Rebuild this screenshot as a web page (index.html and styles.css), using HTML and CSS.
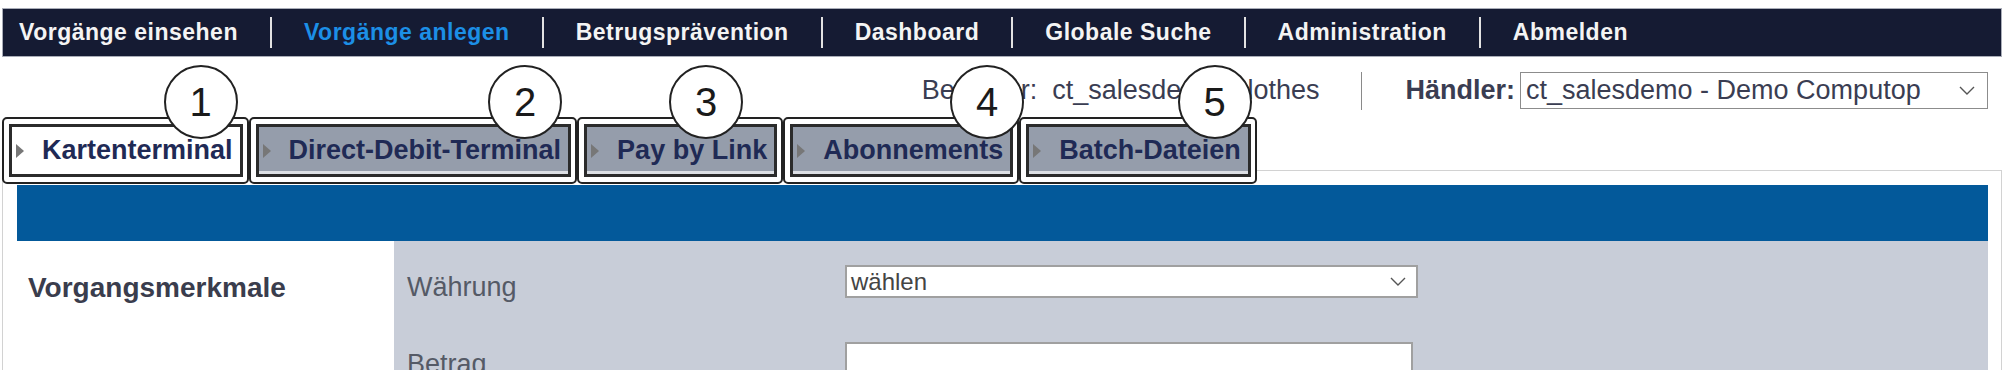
FILE: index.html
```html
<!DOCTYPE html>
<html>
<head>
  <title>Vorgänge anlegen</title>
  <link rel="stylesheet" href="styles.css">
</head>
<body>
  <div class="topnav">
    <a class="nav-item">Vorgänge einsehen</a>
    <a class="nav-item active">Vorgänge anlegen</a>
    <a class="nav-item">Betrugsprävention</a>
    <a class="nav-item">Dashboard</a>
    <a class="nav-item">Globale Suche</a>
    <a class="nav-item">Administration</a>
    <a class="nav-item">Abmelden</a>
  </div>

  <div class="userbar">
    <span class="user">Benutzer:&nbsp; ct_salesdemo_clothes</span>
    <span class="divider"></span>
    <span class="merchant-label">Händler:</span>
    <div class="select merchant">
      <span>ct_salesdemo - Demo Computop</span>
      <svg class="chevron" width="16" height="9" viewBox="0 0 16 9"><polyline points="1,1 8,8 15,1" fill="none" stroke="#555" stroke-width="1.4"/></svg>
    </div>
  </div>

  <div class="tabs">
    <div class="tab-mark">
      <div class="tab active"><span class="arrow"></span>Kartenterminal</div>
      <span class="callout c1">1</span>
    </div>
    <div class="tab-mark">
      <div class="tab"><span class="arrow"></span>Direct-Debit-Terminal</div>
      <span class="callout c2">2</span>
    </div>
    <div class="tab-mark">
      <div class="tab"><span class="arrow"></span>Pay by Link</div>
      <span class="callout c3">3</span>
    </div>
    <div class="tab-mark">
      <div class="tab"><span class="arrow"></span>Abonnements</div>
      <span class="callout c4">4</span>
    </div>
    <div class="tab-mark">
      <div class="tab"><span class="arrow"></span>Batch-Dateien</div>
      <span class="callout c5">5</span>
    </div>
  </div>

  <div class="panel">
    <div class="panel-head"></div>
    <div class="section">
      <div class="section-title">Vorgangsmerkmale</div>
      <div class="fields">
        <div class="field">
          <label>Währung</label>
          <div class="select currency">
            <span>wählen</span>
            <svg class="chevron" width="16" height="9" viewBox="0 0 16 9"><polyline points="1,1 8,8 15,1" fill="none" stroke="#555" stroke-width="1.4"/></svg>
          </div>
        </div>
        <div class="field">
          <label>Betrag</label>
          <div class="input"></div>
        </div>
      </div>
    </div>
  </div>
</body>
</html>
```

FILE: styles.css
```css
html, body {
  overflow: hidden;
}
body {
  margin: 8px 5px 0 2px;
  font-family: "Liberation Sans", Arial, sans-serif;
  background: #fff;
}

/* top navigation */
.topnav {
  display: flex;
  align-items: center;
  height: 47px;
  background: #151b33;
  border: 1px solid #a9adb8;
}
.nav-item {
  color: #f4f4f4;
  font-size: 23px;
  font-weight: bold;
  letter-spacing: 0.5px;
  line-height: 31px;
  padding: 0 32px;
  border-left: 2px solid #e2e2e2;
}
.nav-item:first-child {
  border-left: none;
  padding-left: 16px;
}
.nav-item.active {
  color: #1c8fe6;
}

/* user / merchant line */
.userbar {
  display: flex;
  justify-content: flex-end;
  align-items: center;
  height: 37px;
  margin-top: 15px;
  padding-right: 14px;
}
.user {
  font-size: 27px;
  color: #3a3d52;
}
.divider {
  width: 1px;
  height: 38px;
  background: #8a8a8a;
  margin: 0 43px 0 42px;
}
.merchant-label {
  font-size: 27px;
  font-weight: bold;
  color: #3a3d52;
  margin-right: 5px;
}
.select {
  display: flex;
  align-items: center;
  justify-content: space-between;
  box-sizing: border-box;
  background: #fff;
  border: 1px solid #8c8c8c;
}
.merchant {
  width: 468px;
  height: 37px;
  padding: 0 12px 0 5px;
  font-size: 27px;
  color: #3a3d52;
}

/* tabs */
.tabs {
  display: flex;
  position: relative;
  z-index: 1;
  margin-top: 8px;
  margin-bottom: -14px;
}
.tab-mark {
  position: relative;
  padding: 5px 4px 5px 5px;
  border: 2px solid #222;
  border-radius: 5px;
  background: #fff;
}
.tab {
  display: flex;
  align-items: center;
  height: 47px;
  padding: 0 7px 0 4px;
  border: 3px solid #2b2b2b;
  background: #959dab;
  box-shadow: inset 0 -3px 0 #dcdfe4;
  font-size: 27px;
  font-weight: bold;
  color: #1f2a55;
}
.tab.active {
  background: #fff;
  box-shadow: none;
}
.arrow {
  width: 0;
  height: 0;
  border-left: 8px solid #777;
  border-top: 7px solid transparent;
  border-bottom: 7px solid transparent;
  margin-right: 18px;
}
.callout {
  position: absolute;
  top: -54px;
  width: 70px;
  height: 70px;
  border: 2px solid #222;
  border-radius: 50%;
  background: #fff;
  color: #1a1a1a;
  font-size: 40px;
  line-height: 70px;
  text-align: center;
}
.c1 { right: 9px; }
.c2 { right: 13px; }
.c3 { right: 38px; }
.c4 { right: -7px; }
.c5 { right: 3px; }

/* content panel */
.panel {
  border: 1px solid #d2d2d2;
  padding: 14px 13px 0 14px;
  height: 400px;
}
.panel-head {
  height: 56px;
  background: #03599a;
}
.section {
  display: flex;
}
.section-title {
  width: 377px;
  box-sizing: border-box;
  padding: 30px 11px 0;
  line-height: 33px;
  font-size: 28px;
  font-weight: bold;
  color: #3a3d4d;
}
.fields {
  flex: 1;
  height: 300px;
  background: #c8cdd8;
  padding: 24px 0 0 13px;
}
.field {
  display: flex;
  align-items: flex-start;
  margin-bottom: 38px;
}
.field label {
  width: 438px;
  padding-top: 6px;
  line-height: 33px;
  font-size: 27px;
  color: #555a66;
}
.currency {
  width: 573px;
  height: 33px;
  padding: 0 10px 0 4px;
  border: 2px solid #a0a0a0;
  font-size: 24px;
  color: #444;
}
.input {
  width: 568px;
  height: 33px;
  box-sizing: border-box;
  background: #fff;
  border: 2px solid #a0a0a0;
}
```
